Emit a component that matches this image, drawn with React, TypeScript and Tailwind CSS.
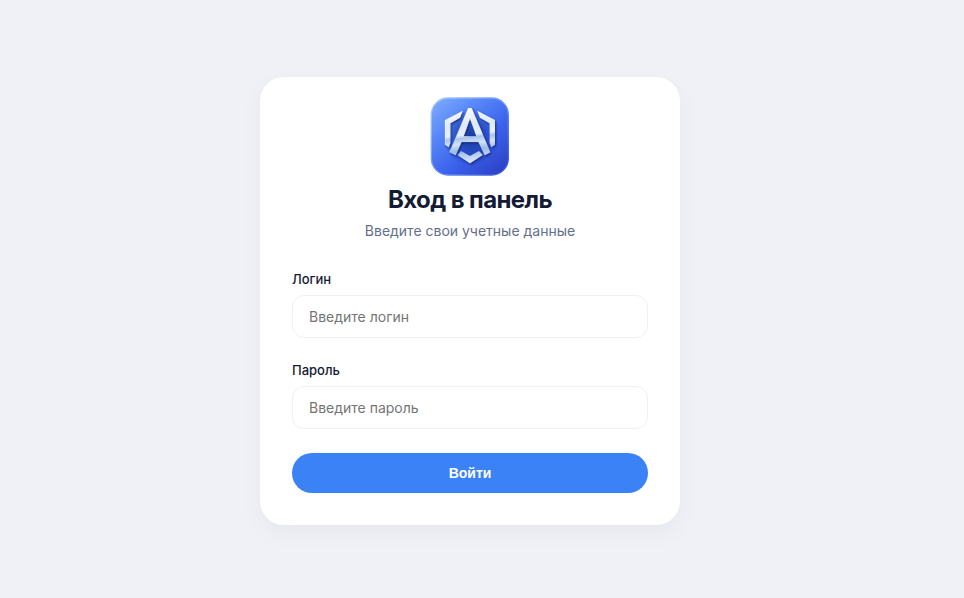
import React, { useState } from 'react';

const Logo = () => (
  <svg viewBox="15 15 240 240" className="size-20" role="img" aria-label="A">
    <defs>
      <linearGradient id="tile" x1="0" y1="0" x2="0.85" y2="1">
        <stop offset="0" stopColor="#80aefc" />
        <stop offset="0.35" stopColor="#5585f8" />
        <stop offset="0.65" stopColor="#3c62ec" />
        <stop offset="1" stopColor="#2c43c8" />
      </linearGradient>
      <linearGradient id="rim" x1="0" y1="0" x2="1" y2="1">
        <stop offset="0" stopColor="#a9cdff" />
        <stop offset="0.5" stopColor="#6d94fa" />
        <stop offset="1" stopColor="#3350d6" />
      </linearGradient>
      <linearGradient id="metal" x1="60" y1="48" x2="80" y2="214" gradientUnits="userSpaceOnUse">
        <stop offset="0" stopColor="#ffffff" />
        <stop offset="0.35" stopColor="#dde9fa" />
        <stop offset="0.52" stopColor="#e6effc" />
        <stop offset="0.58" stopColor="#a9c5ec" />
        <stop offset="0.68" stopColor="#d3e2f7" />
        <stop offset="0.8" stopColor="#9dbbe6" />
        <stop offset="1" stopColor="#d5e4f9" />
      </linearGradient>
      <radialGradient id="core">
        <stop offset="0" stopColor="#12338f" stopOpacity="0.9" />
        <stop offset="0.6" stopColor="#1637a4" stopOpacity="0.5" />
        <stop offset="1" stopColor="#1637a4" stopOpacity="0" />
      </radialGradient>
      <filter id="drop" x="-20%" y="-20%" width="140%" height="150%">
        <feDropShadow dx="3" dy="4" stdDeviation="3" floodColor="#0c2478" floodOpacity="0.9" />
      </filter>
    </defs>
    <rect x="19" y="18" width="231" height="231" rx="50" fill="url(#tile)" stroke="url(#rim)" strokeWidth="4" />
    <ellipse cx="135" cy="135" rx="82" ry="88" fill="url(#core)" />
    <g fill="url(#metal)" filter="url(#drop)">
      <path d="M113 57 L60 85 V158 L71 166 L76 153 V94 L105 77 Z" />
      <path d="M157 57 L210 85 V158 L199 166 L194 153 V94 L165 77 Z" />
      <path d="M108 177 L135 192 L162 177 L173 189 L135 214 L97 189 Z" />
    </g>
    <path
      fill="url(#metal)"
      fillRule="evenodd"
      filter="url(#drop)"
      d="M130 48 H140 L196 181 L179 190 L160 149 H110 L92 190 L74 181 Z M135 80 L116 133 H154 Z"
    />
    <path
      d="M113 57 L60 85 V158 M157 57 L210 85 M130 48 L74 181 M110 149 H160"
      fill="none"
      stroke="#ffffff"
      strokeOpacity="0.6"
      strokeWidth="2"
    />
  </svg>
);

interface FieldProps {
  id: string;
  label: string;
  type: string;
  placeholder: string;
  value: string;
  onChange: (value: string) => void;
}

const Field = ({ id, label, type, placeholder, value, onChange }: FieldProps) => (
  <div className="flex flex-col gap-1.5">
    <label htmlFor={id} className="text-[13px] leading-5 font-medium text-[#141b34]">
      {label}
    </label>
    <input
      id={id}
      type={type}
      placeholder={placeholder}
      value={value}
      onChange={(e) => onChange(e.target.value)}
      className="w-full rounded-xl border border-[#f0f1f4] bg-white px-4 py-3 text-sm leading-[17px] text-[#141b34] outline-none placeholder:text-[#757575] focus:border-blue-500"
    />
  </div>
);

const App = () => {
  const [login, setLogin] = useState('');
  const [password, setPassword] = useState('');

  return (
    <main className="flex min-h-screen items-center justify-center bg-[#f0f1f6] pt-1 pr-10 pl-4 font-['Inter',sans-serif]">
      <div className="w-full max-w-[420px] rounded-3xl bg-white px-8 pt-5 pb-8 shadow-[0_8px_24px_rgba(0,0,0,0.04)]">
        <div className="mb-7 flex flex-col items-center text-center">
          <Logo />
          <h1 className="mt-2 text-2xl leading-[30px] font-bold tracking-tight text-[#141b34]">Вход в панель</h1>
          <p className="mt-1.5 text-sm leading-5 text-[#64708a]">Введите свои учетные данные</p>
        </div>

        <form className="flex flex-col" onSubmit={(e) => e.preventDefault()}>
          <div className="flex flex-col gap-[22px]">
            <Field
              id="login"
              label="Логин"
              type="text"
              placeholder="Введите логин"
              value={login}
              onChange={setLogin}
            />
            <Field
              id="password"
              label="Пароль"
              type="password"
              placeholder="Введите пароль"
              value={password}
              onChange={setPassword}
            />
          </div>
          <button
            type="submit"
            className="mt-6 h-10 rounded-full bg-[#3b82f6] font-['Liberation_Sans',sans-serif] text-sm font-semibold text-white"
          >
            Войти
          </button>
        </form>
      </div>
    </main>
  );
};

export default App;
